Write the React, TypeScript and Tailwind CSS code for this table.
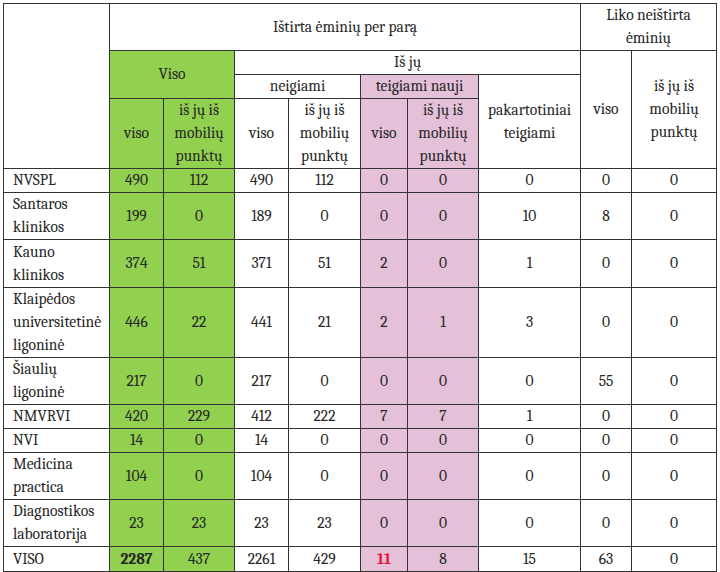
import React from 'react';

type Row = {
  name: string[];
  h: string;
  vals: (string | number)[];
};

const rows: Row[] = [
  { name: ['NVSPL'], h: 'h-[23px]', vals: [490, 112, 490, 112, 0, 0, 0, 0, 0] },
  { name: ['Santaros', 'klinikos'], h: 'h-[47px]', vals: [199, 0, 189, 0, 0, 0, 10, 8, 0] },
  { name: ['Kauno', 'klinikos'], h: 'h-[48px]', vals: [374, 51, 371, 51, 2, 0, 1, 0, 0] },
  { name: ['Klaipėdos', 'universitetinė', 'ligoninė'], h: 'h-[70px]', vals: [446, 22, 441, 21, 2, 1, 3, 0, 0] },
  { name: ['Šiaulių', 'ligoninė'], h: 'h-[47px]', vals: [217, 0, 217, 0, 0, 0, 0, 55, 0] },
  { name: ['NMVRVI'], h: 'h-[24px]', vals: [420, 229, 412, 222, 7, 7, 1, 0, 0] },
  { name: ['NVI'], h: 'h-[24px]', vals: [14, 0, 14, 0, 0, 0, 0, 0, 0] },
  { name: ['Medicina', 'practica'], h: 'h-[46px]', vals: [104, 0, 104, 0, 0, 0, 0, 0, 0] },
  { name: ['Diagnostikos', 'laboratorija'], h: 'h-[47px]', vals: [23, 23, 23, 23, 0, 0, 0, 0, 0] },
];

const total = [2287, 437, 2261, 429, 11, 8, 15, 63, 0];

const cell = 'border border-[#333333] text-center align-middle p-0 font-serif';
const nameCell = 'border border-[#333333] p-0 pl-[9px] text-left align-middle font-serif';
const green = 'bg-[#92d050]';
const pink = 'bg-[#e5c0d9]';

// column fill, index 0..8 for value columns
const fill = (i: number) => (i < 2 ? green : i === 4 || i === 5 ? pink : 'bg-white');

const Mob = () => (
  <>
    iš jų iš
    <br />
    mobilių
    <br />
    punktų
  </>
);

export default function App() {
  return (
    <div className="w-[720px] h-[572px] bg-white pt-[3px] pl-[3px] font-serif">
      <table className="table-fixed border-collapse text-[15.5px] leading-[23px] text-[#262626] font-serif">
        <colgroup>
          <col className="w-[106px]" />
          <col className="w-[54px]" />
          <col className="w-[71px]" />
          <col className="w-[54px]" />
          <col className="w-[72px]" />
          <col className="w-[47px]" />
          <col className="w-[71px]" />
          <col className="w-[102px]" />
          <col className="w-[51px]" />
          <col className="w-[85px]" />
        </colgroup>
        <thead>
          <tr className="h-[47px]">
            <th rowSpan={4} className={`${cell} font-normal`} />
            <th colSpan={7} className={`${cell} font-normal`}>
              Ištirta ėminių per parą
            </th>
            <th colSpan={2} className={`${cell} font-normal`}>
              Liko neištirta
              <br />
              ėminių
            </th>
          </tr>
          <tr className="h-[24px]">
            <th colSpan={2} rowSpan={2} className={`${cell} ${green} font-normal`}>
              Viso
            </th>
            <th colSpan={5} className={`${cell} font-normal`}>
              Iš jų
            </th>
            <th rowSpan={3} className={`${cell} font-normal`}>
              viso
            </th>
            <th rowSpan={3} className={`${cell} font-normal`}>
              <Mob />
            </th>
          </tr>
          <tr className="h-[24px]">
            <th colSpan={2} className={`${cell} font-normal`}>
              neigiami
            </th>
            <th colSpan={2} className={`${cell} ${pink} font-normal`}>
              teigiami nauji
            </th>
            <th rowSpan={2} className={`${cell} font-normal`}>
              pakartotiniai
              <br />
              teigiami
            </th>
          </tr>
          <tr className="h-[70px]">
            <th className={`${cell} ${green} font-normal`}>viso</th>
            <th className={`${cell} ${green} font-normal`}>
              <Mob />
            </th>
            <th className={`${cell} font-normal`}>viso</th>
            <th className={`${cell} font-normal`}>
              <Mob />
            </th>
            <th className={`${cell} ${pink} font-normal`}>viso</th>
            <th className={`${cell} ${pink} font-normal`}>
              <Mob />
            </th>
          </tr>
        </thead>
        <tbody>
          {rows.map((r) => (
            <tr key={r.name.join(' ')} className={r.h}>
              <td className={nameCell}>
                {r.name.map((n, i) => (
                  <React.Fragment key={n}>
                    {i > 0 && <br />}
                    {n}
                  </React.Fragment>
                ))}
              </td>
              {r.vals.map((v, i) => (
                <td key={i} className={`${cell} ${fill(i)}`}>
                  {v}
                </td>
              ))}
            </tr>
          ))}
          <tr className="h-[25px]">
            <td className={nameCell}>VISO</td>
            {total.map((v, i) => (
              <td
                key={i}
                className={`${cell} ${fill(i)} ${i === 0 ? 'font-bold' : ''} ${
                  i === 4 ? 'font-bold text-[#e8102e]' : ''
                }`}
              >
                {v}
              </td>
            ))}
          </tr>
        </tbody>
      </table>
    </div>
  );
}
